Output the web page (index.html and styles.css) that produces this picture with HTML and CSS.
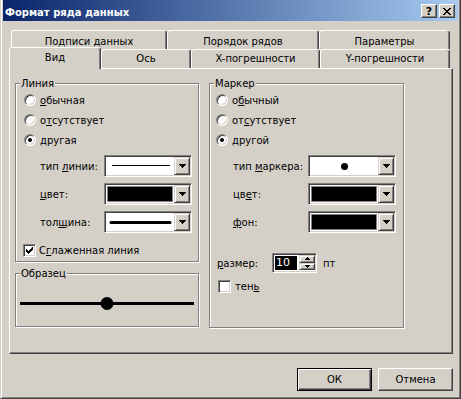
FILE: index.html
```html
<!DOCTYPE html>
<html lang="ru">
<head>
  <meta charset="UTF-8" />
  <title>Формат ряда данных</title>
  <link rel="stylesheet" href="styles.css">
</head>
<body>
  <div class="window">
    <div class="titlebar">
      <span class="title">Формат ряда данных</span>
      <div class="caption-buttons">
        <span class="cap-btn help">?</span>
        <span class="cap-btn close">
          <svg width="8" height="7" viewBox="0 0 8 7"><path d="M0 0h2v1h1v1h2v-1h1v-1h2v1h-1v1h-1v1h-1v1h1v1h1v1h1v1h-2v-1h-1v-1h-2v1h-1v1h-2v-1h1v-1h1v-1h1v-1h-1v-1h-1v-1h-1z" fill="#000"/></svg>
        </span>
      </div>
    </div>

    <div class="tab-row back">
      <div class="tab tab-labels">Подписи данных</div>
      <div class="tab tab-order">Порядок рядов</div>
      <div class="tab tab-params">Параметры</div>
    </div>
    <div class="tab-row front">
      <div class="tab tab-view selected">Вид</div>
      <div class="tab tab-axis">Ось</div>
      <div class="tab tab-xerr">X-погрешности</div>
      <div class="tab tab-yerr">Y-погрешности</div>
    </div>

    <div class="panel">
      <div class="col col-left">
        <fieldset class="group group-line">
          <legend>Линия</legend>
          <div class="option"><span class="radio"></span><span><u>о</u>бычная</span></div>
          <div class="option"><span class="radio"></span><span>о<u>т</u>сутствует</span></div>
          <div class="option"><span class="radio checked"></span><span>другая</span></div>

          <div class="field first">
            <span class="field-label">тип <u>л</u>инии:</span>
            <div class="combo">
              <div class="combo-field">
                <svg width="68" height="18"><line x1="6" y1="8.5" x2="64" y2="8.5" stroke="#000" stroke-width="1"/></svg>
              </div>
              <span class="drop-btn"><svg width="7" height="4"><path d="M0 0h7v1h-1v1h-1v1h-1v1h-1v-1h-1v-1h-1v-1h-1z" fill="#000"/></svg></span>
            </div>
          </div>
          <div class="field">
            <span class="field-label"><u>ц</u>вет:</span>
            <div class="combo">
              <div class="combo-field"><span class="swatch"></span></div>
              <span class="drop-btn"><svg width="7" height="4"><path d="M0 0h7v1h-1v1h-1v1h-1v1h-1v-1h-1v-1h-1v-1h-1z" fill="#000"/></svg></span>
            </div>
          </div>
          <div class="field">
            <span class="field-label">тол<u>щ</u>ина:</span>
            <div class="combo">
              <div class="combo-field">
                <svg width="68" height="18"><line x1="5" y1="9.5" x2="64" y2="9.5" stroke="#000" stroke-width="3" stroke-linecap="round"/></svg>
              </div>
              <span class="drop-btn"><svg width="7" height="4"><path d="M0 0h7v1h-1v1h-1v1h-1v1h-1v-1h-1v-1h-1v-1h-1z" fill="#000"/></svg></span>
            </div>
          </div>

          <div class="check-row">
            <span class="checkbox">
              <svg width="7" height="7"><path d="M6 0h1v3h-1v1h-1v1h-1v1h-1v1h-1v-1h-1v-1h-1v-3h1v1h1v1h1v-1h1v-1h1z" fill="#000"/></svg>
            </span>
            <span>С<u>г</u>лаженная линия</span>
          </div>
        </fieldset>

        <fieldset class="group group-sample">
          <legend>Образец</legend>
          <svg class="sample" width="180" height="46">
            <line x1="4" y1="23.5" x2="178" y2="23.5" stroke="#000" stroke-width="3"/>
            <circle cx="91" cy="23.5" r="6.5" fill="#000"/>
          </svg>
        </fieldset>
      </div>

      <div class="col col-right">
        <fieldset class="group group-marker">
          <legend>Маркер</legend>
          <div class="option"><span class="radio"></span><span>о<u>б</u>ычный</span></div>
          <div class="option"><span class="radio"></span><span>от<u>с</u>утствует</span></div>
          <div class="option"><span class="radio checked"></span><span>другой</span></div>

          <div class="field first">
            <span class="field-label">тип <u>м</u>аркера:</span>
            <div class="combo">
              <div class="combo-field"><span class="marker-dot"></span></div>
              <span class="drop-btn"><svg width="7" height="4"><path d="M0 0h7v1h-1v1h-1v1h-1v1h-1v-1h-1v-1h-1v-1h-1z" fill="#000"/></svg></span>
            </div>
          </div>
          <div class="field">
            <span class="field-label">цв<u>е</u>т:</span>
            <div class="combo">
              <div class="combo-field"><span class="swatch"></span></div>
              <span class="drop-btn"><svg width="7" height="4"><path d="M0 0h7v1h-1v1h-1v1h-1v1h-1v-1h-1v-1h-1v-1h-1z" fill="#000"/></svg></span>
            </div>
          </div>
          <div class="field">
            <span class="field-label"><u>ф</u>он:</span>
            <div class="combo">
              <div class="combo-field"><span class="swatch"></span></div>
              <span class="drop-btn"><svg width="7" height="4"><path d="M0 0h7v1h-1v1h-1v1h-1v1h-1v-1h-1v-1h-1v-1h-1z" fill="#000"/></svg></span>
            </div>
          </div>

          <div class="size-row">
            <span class="size-label"><u>р</u>азмер:</span>
            <div class="spinner">
              <span class="spin-value">10</span>
              <div class="spin-btns">
                <span class="spin-btn"><svg width="5" height="3"><path d="M2 0h1v1h1v1h1v1h-5v-1h1v-1h1z" fill="#000"/></svg></span>
                <span class="spin-btn"><svg width="5" height="3"><path d="M0 0h5v1h-1v1h-1v1h-1v-1h-1v-1h-1z" fill="#000"/></svg></span>
              </div>
            </div>
            <span class="unit">пт</span>
          </div>

          <div class="check-row shadow-row">
            <span class="checkbox"></span>
            <span>тен<u>ь</u></span>
          </div>
        </fieldset>
      </div>
    </div>

    <div class="buttons">
      <button class="btn default">ОК</button>
      <button class="btn">Отмена</button>
    </div>
  </div>
</body>
</html>
```

FILE: styles.css
```css
* {
  box-sizing: border-box;
}
body {
  margin: 0;
  background: #d4d0c8;
  font-family: "DejaVu Sans", sans-serif;
  font-size: 10px;
  color: #000;
}
u {
  text-decoration: underline;
  text-underline-offset: 1px;
}

.window {
  width: 461px;
  height: 399px;
  background: #d4d0c8;
  border: 1px solid #404040;
  border-top: 0;
  border-left-color: #d4d0c8;
  padding: 0 2px 2px 2px;
  box-shadow: inset 1px 0 #fff, inset -1px -1px #808080;
}

/* title bar */
.titlebar {
  display: flex;
  justify-content: space-between;
  height: 21px;
  padding: 0 3px 0 2px;
  background: linear-gradient(to right, #0a246a, #a6caf0);
  color: #fff;
}
.title {
  font-weight: bold;
  line-height: 13px;
  margin-top: 6px;
}
.caption-buttons {
  display: flex;
  gap: 2px;
  margin-top: 4px;
}
.cap-btn {
  width: 16px;
  height: 14px;
  display: flex;
  align-items: center;
  justify-content: center;
  background: #d4d0c8;
  border: 1px solid;
  border-color: #fff #404040 #404040 #fff;
  box-shadow: inset -1px -1px #808080;
  color: #000;
  font-weight: bold;
  font-size: 11px;
}

/* tabs */
.tab-row {
  display: flex;
  align-items: flex-end;
  height: 19px;
}
.tab-row.back {
  margin-top: 9px;
  padding-left: 8px;
}
.tab-row.front {
  padding-left: 6px;
}
.tab {
  height: 19px;
  background: #d4d0c8;
  border: 1px solid;
  border-bottom: 0;
  border-color: #fff #404040 #fff #fff;
  border-radius: 3px 3px 0 0;
  box-shadow: inset -1px 0 #808080;
  text-align: center;
  line-height: 17px;
}
.tab-row.back .tab {
  padding-top: 2px;
}
.tab.selected {
  height: 22px;
  margin-bottom: -1px;
  position: relative;
  z-index: 1;
  line-height: 19px;
}
.tab-labels { width: 156px; }
.tab-order { width: 152px; }
.tab-params { width: 131px; }
.tab-view { width: 92px; }
.tab-axis { width: 90px; }
.tab-xerr { width: 129px; }
.tab-yerr { width: 130px; }

/* panel */
.panel {
  display: flex;
  gap: 10px;
  width: 444px;
  height: 286px;
  margin-left: 6px;
  padding: 8px 0 0 5px;
  border: 1px solid;
  border-color: #fff #404040 #404040 #fff;
  box-shadow: inset -1px -1px #808080;
}
.col {
  display: flex;
  flex-direction: column;
}

.group {
  margin: 0;
  padding: 0;
  min-width: 0;
  border: 1px solid #808080;
  box-shadow: inset 1px 1px #fff, 1px 1px #fff;
}
.group legend {
  padding: 0 1px;
  margin-left: 4px;
  line-height: 13px;
  background: #d4d0c8;
}
.group-line {
  width: 184px;
  padding-bottom: 2px;
}
.group-sample {
  width: 184px;
  margin-top: 5px;
}
.sample {
  display: block;
}
.group-marker {
  width: 195px;
  padding-bottom: 34px;
}

/* radios and checkboxes */
.option {
  display: flex;
  align-items: center;
  height: 20px;
  margin-left: 8px;
}
.group-marker .option {
  margin-left: 6px;
}
.radio {
  width: 12px;
  height: 12px;
  margin-right: 4px;
  border-radius: 50%;
  background: #fff;
  border: 1px solid;
  border-color: #808080 #fff #fff #808080;
  box-shadow: inset 1px 1px #404040, inset -1px -1px #d4d0c8;
  display: flex;
  align-items: center;
  justify-content: center;
}
.radio.checked::after {
  content: "";
  width: 4px;
  height: 4px;
  border-radius: 50%;
  background: #000;
}
.check-row {
  display: flex;
  align-items: center;
  height: 18px;
  margin: 8px 0 0 7px;
}
.checkbox {
  width: 13px;
  height: 13px;
  margin-right: 3px;
  background: #fff;
  border: 1px solid;
  border-color: #808080 #fff #fff #808080;
  box-shadow: inset 1px 1px #404040, inset -1px -1px #d4d0c8;
  display: flex;
  align-items: center;
  justify-content: center;
}
.shadow-row {
  height: 13px;
  margin: 7px 0 0 8px;
}
.shadow-row .checkbox {
  margin-right: 4px;
}

/* combo boxes */
.field {
  display: flex;
  align-items: center;
  height: 22px;
  margin: 6px 0 0 24px;
}
.field.first {
  margin-top: 5px;
}
.field-label {
  width: 64px;
}
.group-marker .field {
  margin-left: 23px;
}
.group-marker .field-label {
  width: 75px;
}
.combo {
  display: flex;
  width: 88px;
  height: 22px;
  padding: 1px;
  background: #fff;
  border: 1px solid;
  border-color: #808080 #fff #fff #808080;
  box-shadow: inset 1px 1px #404040, inset -1px -1px #d4d0c8;
}
.combo-field {
  flex: 1;
  display: flex;
  align-items: center;
  justify-content: center;
}
.swatch {
  width: 66px;
  height: 16px;
  background: #000;
  border: 1px solid #808080;
}
.marker-dot {
  width: 7px;
  height: 7px;
  border-radius: 50%;
  background: #000;
}
.drop-btn {
  width: 16px;
  height: 18px;
  display: flex;
  align-items: center;
  justify-content: center;
  background: #d4d0c8;
  border: 1px solid;
  border-color: #d4d0c8 #404040 #404040 #d4d0c8;
  box-shadow: inset 1px 1px #fff, inset -1px -1px #808080;
}
.drop-btn svg {
  display: block;
}

/* size spinner */
.size-row {
  display: flex;
  align-items: center;
  height: 20px;
  margin: 20px 0 0 7px;
}
.size-label {
  width: 55px;
}
.spinner {
  display: flex;
  width: 45px;
  height: 20px;
  padding: 2px 1px 2px 2px;
  background: #fff;
  border: 1px solid;
  border-color: #808080 #fff #fff #808080;
  box-shadow: inset 1px 1px #404040, inset -1px -1px #d4d0c8;
}
.spin-value {
  width: 23px;
  margin-right: 2px;
  background: #000;
  color: #fff;
  line-height: 14px;
  padding-left: 1px;
  font-size: 11px;
}
.spin-btns {
  display: flex;
  flex-direction: column;
  margin-top: -1px;
}
.spin-btn {
  width: 16px;
  height: 8px;
  display: flex;
  align-items: center;
  justify-content: center;
  background: #d4d0c8;
  border: 1px solid;
  border-color: #d4d0c8 #404040 #404040 #d4d0c8;
  box-shadow: inset 1px 1px #fff, inset -1px -1px #808080;
}
.spin-btn svg {
  display: block;
}
.unit {
  margin-left: 6px;
}

/* dialog buttons */
.buttons {
  display: flex;
  justify-content: flex-end;
  gap: 6px;
  margin-top: 14px;
  padding-right: 5px;
}
.btn {
  width: 75px;
  height: 23px;
  padding: 0;
  font-family: "DejaVu Sans", sans-serif;
  font-size: 10px;
  color: #000;
  background: #d4d0c8;
  border: 1px solid;
  border-color: #fff #404040 #404040 #fff;
  box-shadow: inset -1px -1px #808080;
}
.btn.default {
  border-color: #000;
  box-shadow: inset 1px 1px #fff, inset -1px -1px #404040, inset -2px -2px #808080;
}
```
